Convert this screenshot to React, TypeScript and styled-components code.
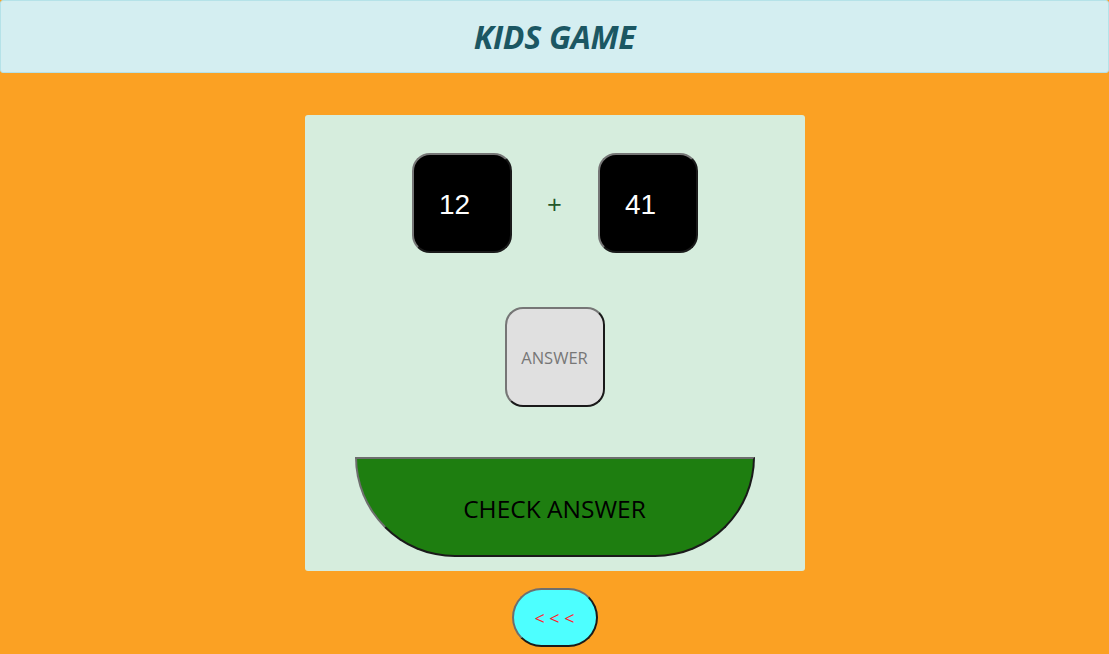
import React from "react";
import styled, { createGlobalStyle } from "styled-components";

const Global = createGlobalStyle`
  html, body { margin: 0; padding: 0; }
  body {
    background: #fba123;
    font-family: "Open Sans", "Noto Sans", sans-serif;
  }
  * { box-sizing: border-box; }
`;

const Page = styled.div`
  display: flex;
  flex-direction: column;
  align-items: center;
  min-height: 654px;
`;

const Header = styled.header`
  width: 100%;
  height: 73px;
  background: #d4eef1;
  border: 1px solid #b5e2e8;
  border-radius: 3px;
  display: flex;
  align-items: center;
  justify-content: center;
`;

const Title = styled.h1`
  margin: 0;
  font-size: 32px;
  font-weight: 700;
  font-style: italic;
  color: #1b5763;
  letter-spacing: -0.3px;
`;

const Card = styled.main`
  margin-top: 42px;
  width: 500px;
  height: 456px;
  background: #d6eddd;
  border-radius: 3px;
  display: flex;
  flex-direction: column;
  align-items: center;
  padding-top: 38px;
`;

const Row = styled.div`
  display: flex;
  align-items: center;
`;

const Tile = styled.div<{ $bg: string; $fg: string }>`
  width: 100px;
  height: 100px;
  border-radius: 18px;
  border: 2px solid;
  border-color: #767676 #1a1a1a #1a1a1a #767676;
  background: ${(p) => p.$bg};
  color: ${(p) => p.$fg};
  display: flex;
  align-items: center;
  justify-content: center;
`;

const Num = styled.span`
  font-family: "Liberation Sans", Arial, sans-serif;
  font-size: 28px;
  margin-right: 14px;
  padding-top: 4px;
`;

const Plus = styled.span`
  width: 86px;
  text-align: center;
  font-size: 26px;
  color: #24572a;
  padding-top: 2px;
`;

const Placeholder = styled.span`
  font-size: 16.5px;
  color: #777;
`;

const AnswerWrap = styled.div`
  margin-top: 54px;
`;

const CheckButton = styled.button`
  margin-top: 50px;
  width: 400px;
  height: 100px;
  background: #1e7e10;
  border: 2px solid;
  border-color: #6e6e6e #1a1a1a #1a1a1a #6e6e6e;
  border-radius: 0 0 100px 100px;
  font-family: "Open Sans", sans-serif;
  font-size: 24.5px;
  color: #000;
  padding: 0;
  padding-top: 2px;
`;

const BackButton = styled.button`
  margin-top: 17px;
  width: 86px;
  height: 59px;
  background: #4dffff;
  border: 2px solid;
  border-color: #6e6e6e #1a1a1a #1a1a1a #6e6e6e;
  border-radius: 30px;
  color: #ff2030;
  font-family: "Open Sans", sans-serif;
  font-size: 18px;
  letter-spacing: 0px;
  padding: 0;
`;

export default function App() {
  return (
    <>
      <Global />
      <Page>
        <Header>
          <Title>KIDS GAME</Title>
        </Header>
        <Card>
          <Row>
            <Tile $bg="#000" $fg="#fff">
              <Num>12</Num>
            </Tile>
            <Plus>+</Plus>
            <Tile $bg="#000" $fg="#fff">
              <Num>41</Num>
            </Tile>
          </Row>
          <AnswerWrap>
            <Tile $bg="#e0e0e0" $fg="#777">
              <Placeholder>ANSWER</Placeholder>
            </Tile>
          </AnswerWrap>
          <CheckButton>CHECK ANSWER</CheckButton>
        </Card>
        <BackButton>&lt; &lt; &lt;</BackButton>
      </Page>
    </>
  );
}
